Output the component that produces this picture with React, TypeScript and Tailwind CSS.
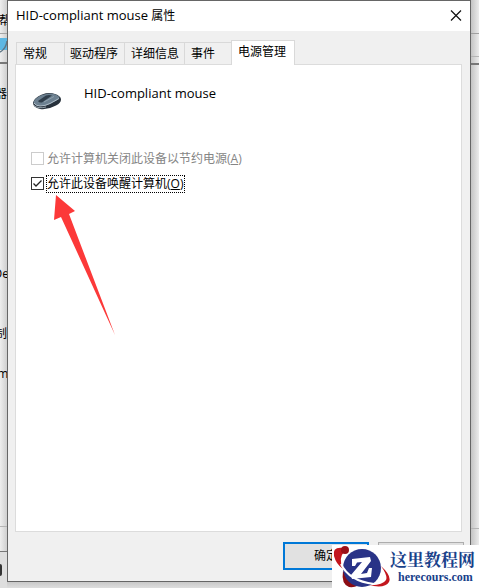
import { useState } from "react";
import clsx from "clsx";

const TABS = [
  { id: "general", label: "常规", className: "w-12 pl-1.5" },
  { id: "driver", label: "驱动程序", className: "w-[60px] pl-[5px]" },
  { id: "details", label: "详细信息", className: "w-[60px] pl-1.5" },
  { id: "events", label: "事件", className: "w-[47px] pl-1.5" },
  { id: "power", label: "电源管理", className: "w-16 pl-1.5" },
];

function MouseIcon() {
  return (
    <svg width="32" height="32" viewBox="0 0 32 32" aria-hidden="true">
      <path d="M2 17.500 Q3 13 11 9.500 Q18 7 24 9 Q30 11 30 14.500 Q30 18 25 20.500 Q17 25 9 24 Q2 22.500 2 17.500Z" fill="#27313b" />
      <path d="M2.500 17 Q4 13 11 10 Q18 7.500 23 9 Q28 10.500 28.500 13 Q26 15.500 20 18.500 Q14 21.500 8 21 Q3 20 2.500 17Z" fill="#6c8090" />
      <path d="M3 18 Q5 21 9 21 Q14 21 19 18.500 L28 13.500" fill="none" stroke="#aebdc8" />
      <path d="M7 16 L15 10.500 Q18 9.500 21 10.500 L11 17.500 Q8 18 7 16Z" fill="#303e4b" />
      <path d="M13 17 L23 11.500" fill="none" stroke="#8fa1ae" />
      <path d="M3 20.500 Q7 24 15 22" fill="none" stroke="#95a2ac" />
    </svg>
  );
}

function LogoIcon() {
  return (
    <svg width="60" height="43" viewBox="0 0 60 43" aria-hidden="true">
      <path d="M12 3 Q0 1 2 11 Q4 19 11 24 Q6 13 12 7Z" fill="#c3161d" />
      <path d="M11 26 Q17 34 30 37 Q26 43 17 42 Q9 39 11 26Z" fill="#8c0d14" />
      <path d="M49 21 Q60 31 57 37 Q53 44 36 40 Q50 41 54 35 Q56 31 49 21Z" fill="#c3161d" />
      <circle cx="30" cy="23" r="19" fill="#293387" />
      <path d="M9 19 Q17 36 42 39" fill="none" stroke="#fff" strokeWidth="2" />
      <path d="M20 14 L38 12 L39 16 L29 29 L35 28 L37 23 L40 23 L39 32 L20 34 L19 30 L30 17 L25 17.500 L23 21 L20 21Z" fill="#fff" />
      <circle cx="13" cy="5" r="4" fill="#9b1018" />
    </svg>
  );
}

// Part of the device manager window still visible left of the dialog
function LeftEdge() {
  return (
    <div className="flex w-[7px] shrink-0 flex-col overflow-hidden bg-linear-to-r from-[#eeeeee] to-[#cfcfcf] whitespace-nowrap">
      <div className="-mr-1 flex h-[34px] items-center justify-end border-b border-[#a5a5a5] pt-2">帮</div>
      <div className="h-[30px] border-b-2 border-[#777] pt-1">
        <svg width="7" height="16" viewBox="0 0 7 16" className="block" aria-hidden="true">
          <path d="M0 0 H7 V12 H0Z" fill="#5db7e3" />
          <path d="M7 3 Q6 11 0 14" fill="none" stroke="#5e7685" strokeWidth="1.500" />
        </svg>
      </div>
      <div className="mt-5 flex h-5 items-center justify-end">器</div>
      <div className="mt-40 -mr-0.5 flex h-5 items-center justify-end">De</div>
      <div className="mt-10 flex h-5 items-center justify-end">制</div>
      <div className="mt-5 -mr-2 flex h-5 items-center justify-end">me</div>
      <div className="grow" />
      <div className="h-[26px] border-y border-t-[#b5b5b5] border-b-[#777]" />
      <div className="h-9 bg-[#dedede] pt-3">
        <div className="h-3 w-0.5 rounded-r-full bg-[#333]" />
      </div>
    </div>
  );
}

function RightEdge() {
  return (
    <div className="flex w-2 shrink-0 flex-col bg-linear-to-r from-[#c4c4c4] to-[#ececec]">
      <div className="h-[34px] border-b border-[#a0a0a0]" />
      <div className="h-[23px] border-b border-[#b5b5b5]" />
      <div className="h-2 border-b-2 border-[#777]" />
      <div className="grow" />
      <div className="h-[60px] border-t border-[#b5b5b5]" />
    </div>
  );
}

export default function App() {
  const [tab, setTab] = useState("power");
  const [allowWake, setAllowWake] = useState(true);

  return (
    <div className="relative flex min-h-screen overflow-hidden bg-[#d8d8d8] font-['Open_Sans','Noto_Sans_CJK_SC',sans-serif] text-xs text-black">
      <LeftEdge />
      <div className="flex min-w-0 grow flex-col bg-linear-to-b from-[#b5b5b5] from-98% to-[#dedede]">
        <main className="mb-[6px] flex grow flex-col border border-[#666] bg-[#f0f0f0]">
          <header className="flex h-[30px] items-center justify-between bg-white pr-2 pl-2">
            <h1 className="text-[13px]">
              HID-compliant mouse <span className="text-xs">属性</span>
            </h1>
            <button type="button" aria-label="关闭">
              <svg width="12" height="12" viewBox="0 0 12 12" className="block">
                <path d="M1 0.500 L11 10.500 M11 0.500 L1 10.500" stroke="#111" strokeWidth="1.200" />
              </svg>
            </button>
          </header>

          <div className="flex grow flex-col pt-[9px] pr-2 pl-[7px]">
            <div role="tablist" className="flex items-end pl-px">
              {TABS.map((item) => (
                <button
                  key={item.id}
                  type="button"
                  role="tab"
                  aria-selected={tab === item.id}
                  onClick={() => setTab(item.id)}
                  className={clsx(
                    "shrink-0 border-t border-l border-[#d9d9d9] text-left whitespace-nowrap",
                    item.className,
                    tab === item.id ? "z-10 -mb-px h-[25px] border-r bg-white pb-0.5" : "h-[22px] bg-[#f0f0f0]",
                  )}
                >
                  {item.label}
                </button>
              ))}
            </div>

            <section role="tabpanel" className="relative grow border border-[#dcdcdc] bg-white px-[15px] pt-5">
              <div className="flex gap-[21px]">
                <MouseIcon />
                <p className="text-[13px] leading-4">HID-compliant mouse</p>
              </div>

              <div className="mt-8 flex flex-col gap-[5px]">
                <label className="flex h-5 items-center gap-0.5 text-[#858585]">
                  <input type="checkbox" disabled className="mb-0.5 size-[13px] appearance-none border border-[#ccc] bg-white" />
                  <span className="px-px">
                    允许计算机关闭此设备以节约电源(<u>A</u>)
                  </span>
                </label>
                <label className="flex h-5 items-center gap-0.5">
                  <span className="mb-0.5 grid size-[13px]">
                    <input
                      type="checkbox"
                      checked={allowWake}
                      onChange={(e) => setAllowWake(e.target.checked)}
                      className="col-start-1 row-start-1 size-[13px] appearance-none border border-[#333] bg-white"
                    />
                    {allowWake && (
                      <svg viewBox="0 0 13 13" className="pointer-events-none col-start-1 row-start-1 size-[13px]">
                        <path d="M2.500 6.500 L5 9 L10.500 3.500" fill="none" stroke="#222" strokeWidth="1.300" />
                      </svg>
                    )}
                  </span>
                  <span className="border border-dotted border-black pr-px leading-4">
                    允许此设备唤醒计算机(<u>O</u>)
                  </span>
                </label>
              </div>

              <svg className="pointer-events-none absolute top-[130px] left-9" width="64" height="142" viewBox="0 0 64 142" aria-hidden="true">
                <path d="M4 0 L23 16 L17 19 L63 140 L9 22 L2 25Z" fill="#fc3939" />
              </svg>
            </section>

            <footer className="flex h-[49px] shrink-0 items-start justify-end gap-[9px] pt-2.5">
              <button type="button" className="h-7 w-[86px] border-2 border-[#0078d7] bg-[#e1e1e1]">
                确定
              </button>
              <button type="button" aria-label="取消" className="-mr-0.5 h-7 w-[86px] border border-[#adadad] bg-[#e1e1e1]" />
            </footer>
          </div>
        </main>
      </div>
      <RightEdge />

      <a href="#" className="absolute right-0 bottom-0 z-20 flex h-[43px] w-[147px] overflow-hidden bg-white whitespace-nowrap text-[#18418a]">
        <LogoIcon />
        <span className="-ml-0.5 flex flex-col pt-1">
          <span className="font-['Noto_Serif_CJK_SC','Noto_Sans_CJK_SC',serif] text-[17px] leading-5 font-bold">这里教程网</span>
          <span className="pl-2 font-['Liberation_Serif',serif] text-xs leading-4 font-bold">herecours.com</span>
        </span>
      </a>
    </div>
  );
}
